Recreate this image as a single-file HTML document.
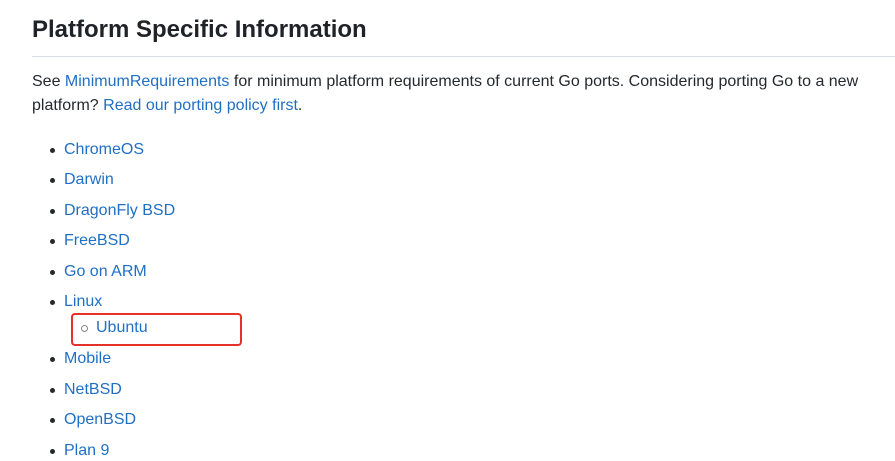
<!DOCTYPE html>
<html><head><meta charset="utf-8"><style>
body{margin:0;width:895px;height:449px;overflow:hidden;background:#fff;font-family:"Liberation Sans",Arial,sans-serif;color:#24292e;position:relative}
h1{position:absolute;left:32px;top:14px;margin:0;font-size:24px;font-weight:bold;line-height:32px;color:#1f2328}
.hr{position:absolute;left:32px;right:0;top:56px;height:1px;background:#d8dee4}
.p{position:absolute;left:32px;font-size:16px;line-height:20px;white-space:nowrap}
a{color:#1f6fc5;text-decoration:none}
.li{position:absolute;left:64px;font-size:16px;line-height:20px;color:#1f6fc5}
.li:before{content:"";position:absolute;left:-14px;top:8px;width:5px;height:5px;border-radius:50%;background:#24292e}
.sub{position:absolute;left:96px;font-size:16px;line-height:20px;color:#1f6fc5}
.sub:before{content:"";position:absolute;left:-15px;top:7px;width:5px;height:5px;border-radius:50%;border:1px solid #888}
.box{position:absolute;left:71px;top:313px;width:167px;height:29px;border:2px solid #e5312a;border-radius:4px}
</style></head><body>
<h1>Platform Specific Information</h1>
<div class="hr"></div>
<div class="p" style="top:72px">See <a>MinimumRequirements</a> for minimum platform requirements of current Go ports. Considering porting Go to a new</div>
<div class="p" style="top:96px">platform? <a>Read our porting policy first</a>.</div>
<div class="li" style="top:140px">ChromeOS</div>
<div class="li" style="top:170px">Darwin</div>
<div class="li" style="top:201px">DragonFly BSD</div>
<div class="li" style="top:231px">FreeBSD</div>
<div class="li" style="top:262px">Go on ARM</div>
<div class="li" style="top:292px">Linux</div>
<div class="sub" style="top:318px">Ubuntu</div>
<div class="box"></div>
<div class="li" style="top:349px">Mobile</div>
<div class="li" style="top:380px">NetBSD</div>
<div class="li" style="top:410px">OpenBSD</div>
<div class="li" style="top:441px">Plan 9</div>
</body></html>
